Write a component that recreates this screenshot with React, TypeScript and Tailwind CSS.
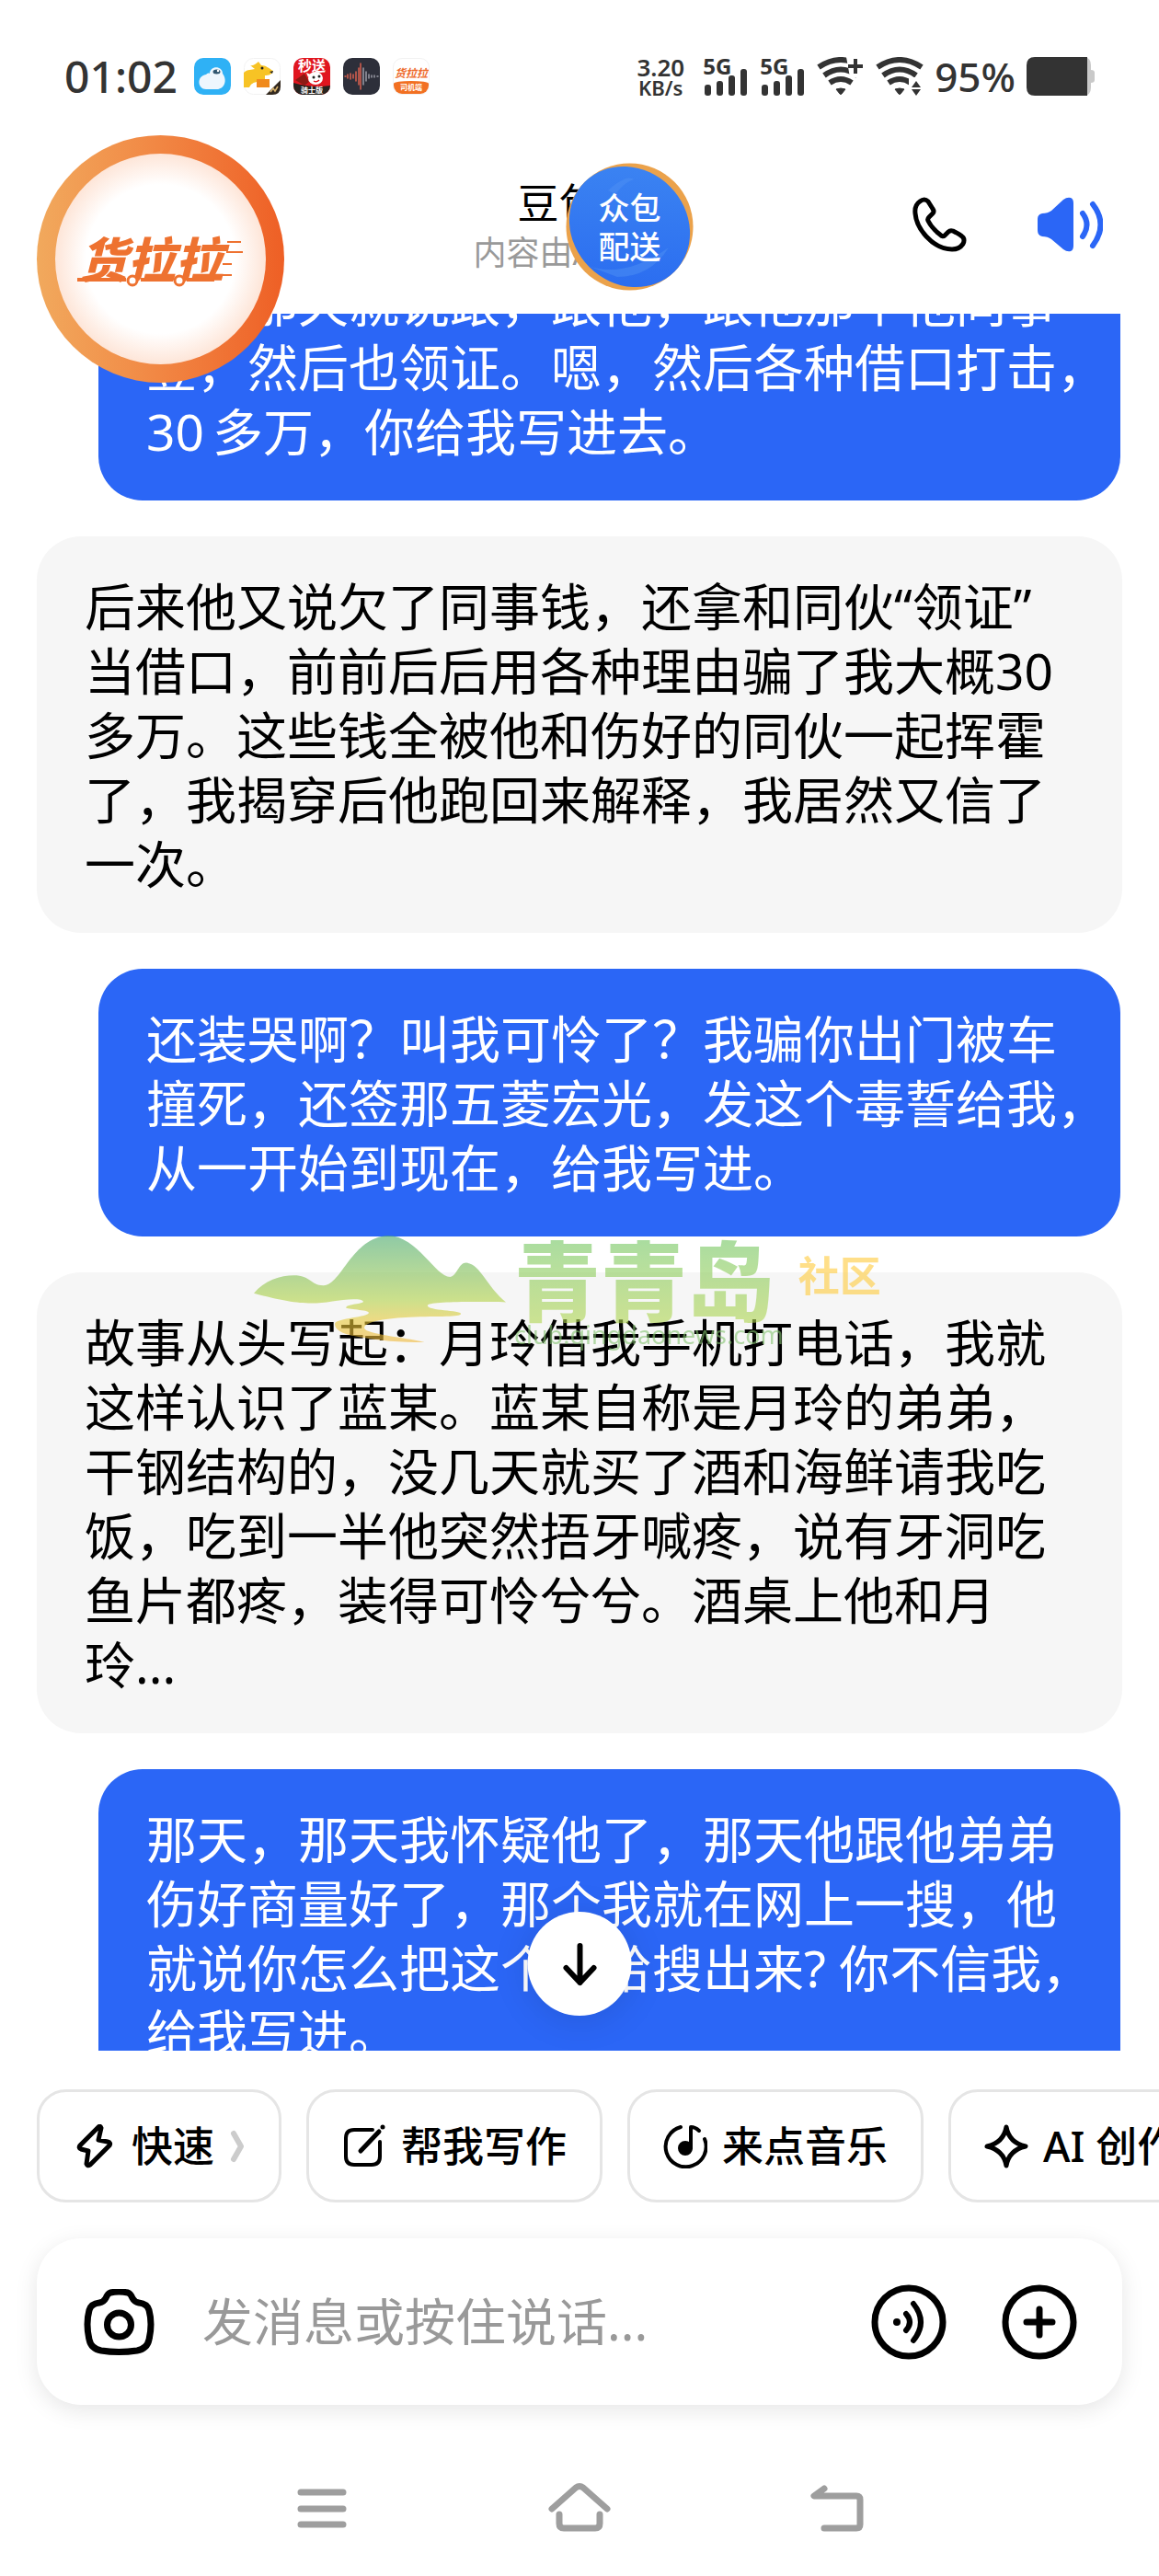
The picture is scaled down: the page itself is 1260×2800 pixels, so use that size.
import type { ReactNode } from 'react';

type Message = { from: 'me' | 'bot'; lines: string[]; watermark?: boolean };

const messages: Message[] = [
  {
    from: 'me',
    lines: ['后来那天就说跟，跟他，跟他那个他同事', '登，然后也领证。嗯，然后各种借口打击，', '30\u2009多万，你给我写进去。'],
  },
  {
    from: 'bot',
    lines: [
      '后来他又说欠了同事钱，还拿和同伙“领证”',
      '当借口，前前后后用各种理由骗了我大概30',
      '多万。这些钱全被他和伤好的同伙一起挥霍',
      '了，我揭穿后他跑回来解释，我居然又信了',
      '一次。',
    ],
  },
  {
    from: 'me',
    lines: ['还装哭啊？叫我可怜了？我骗你出门被车', '撞死，还签那五菱宏光，发这个毒誓给我，', '从一开始到现在，给我写进。'],
  },
  {
    from: 'bot',
    watermark: true,
    lines: [
      '故事从头写起：月玲借我手机打电话，我就',
      '这样认识了蓝某。蓝某自称是月玲的弟弟，',
      '干钢结构的，没几天就买了酒和海鲜请我吃',
      '饭，吃到一半他突然捂牙喊疼，说有牙洞吃',
      '鱼片都疼，装得可怜兮兮。酒桌上他和月',
      '玲...',
    ],
  },
  {
    from: 'me',
    lines: [
      '那天，那天我怀疑他了，那天他跟他弟弟',
      '伤好商量好了，那个我就在网上一搜，他',
      '就说你怎么把这个事给搜出来? 你不信我，',
      '给我写进。',
    ],
  },
];

function AppIcons() {
  return (
    <div className="flex gap-[14px]">
      <svg viewBox="0 0 40 40" className="size-10">
        <rect width="40" height="40" rx="10" fill="#2fb1f5" />
        <path d="M17 17c0-9 14-9 14 0 6 8 1 17-6 17H13C4 34 2 20 13 18c1-1 3-2 4-1z" fill="#eef6fd" />
        <ellipse cx="24.500" cy="15" rx="4" ry="2.500" fill="#31566f" />
        <circle cx="26" cy="14" r="1.200" fill="#fff" />
      </svg>
      <svg viewBox="0 0 40 40" className="size-10">
        <rect x=".5" y=".5" width="39" height="39" rx="10" fill="#fff" stroke="#f2f2f2" />
        <path d="M0 16c4-4 9-3 12-4L7 8c4 1 6-2 9-4l3 4c5 0 8 3 13 6-1 4-5 5-9 5v12H14v-5c-4 1-6 2-8 6H0z" fill="#f7c325" />
        <path d="M14 23h14v9H14z" fill="#f08a1c" />
        <circle cx="20" cy="11" r="1.500" fill="#222" />
        <path d="M28 15l4-1-1 3z" fill="#222" />
        <path d="M40 24v7q0 9-9 9h-7z" fill="#33291f" />
        <path d="M29 37l3-4 2 3 3-5" stroke="#d9b36b" strokeWidth="1.500" fill="none" />
      </svg>
      <div className="relative flex size-10 flex-col items-center justify-between overflow-hidden rounded-[10px] bg-[#e0161f] text-white">
        <svg viewBox="0 0 40 40" className="absolute inset-0">
          <path d="M0 27q20 6 40 3v10H0z" fill="#26231f" />
          <path d="M2 24l10-7 5 9-5 4z" fill="#8c1a14" />
          <ellipse cx="24" cy="22" rx="8" ry="7" fill="#fff" />
          <path d="M14 16l5 2-3 3z" fill="#fff" />
          <circle cx="22" cy="21" r="1.500" fill="#222" />
          <circle cx="28" cy="20" r="1.500" fill="#222" />
          <path d="M22 25q3 2 6-1" stroke="#e0161f" strokeWidth="1.500" fill="none" />
        </svg>
        <span className="relative text-[15px] leading-4 font-bold">秒送</span>
        <span className="relative text-[8px] leading-[11px] font-bold">骑士版</span>
      </div>
      <svg viewBox="0 0 40 40" className="size-10" fill="none" strokeWidth="1.500" strokeLinecap="round">
        <rect width="40" height="40" rx="10" fill="#2d2f3a" />
        <path d="M2 20h1M5 18v4M8 17v6M11 18v4M14 15v10M17 11v18M19 6v28" stroke="#d9604f" />
        <path d="M22 11v18M25 15v10M28 18v4M31 19v2M34 19v2M37 20h1" stroke="#9a9ca6" />
      </svg>
      <div className="flex size-10 flex-col justify-between overflow-hidden rounded-[10px] border border-[#f2f2f2] bg-white">
        <span className="pt-2 text-center text-xs leading-4 font-bold text-[#ee6a2c] italic">货拉拉</span>
        <span className="rounded-t-[50%_20%] bg-[#f27022] text-center text-[8px] leading-[14px] font-bold text-white">司机端</span>
      </div>
    </div>
  );
}

function Signal() {
  return (
    <div className="flex w-[50px] flex-col">
      <span className="h-[20px] text-2xl leading-[20px] font-bold">5G</span>
      <svg viewBox="0 0 50 30" className="-mt-[8px] h-[30px] w-[50px]" fill="#333">
        <rect x="2" y="18" width="7" height="12" rx="3" />
        <rect x="15" y="14" width="7" height="16" rx="3" />
        <rect x="28" y="8" width="7" height="22" rx="3" />
        <rect x="41" y="1" width="7" height="29" rx="3" />
      </svg>
    </div>
  );
}

function Wifi({ children }: { children: ReactNode }) {
  return (
    <svg viewBox="0 0 52 42" className="h-[42px] w-[52px]" fill="none" stroke="#333" strokeWidth="6">
      <path d="M2 11Q26-5 50 11" />
      <path d="M8 20Q26 7 44 20" />
      <path d="M14 28Q26 20 38 28" />
      <path d="M21 35q5-2 10 0l-4 5q-1 1-2 0z" fill="#333" strokeWidth="1" />
      {children}
    </svg>
  );
}

function StatusBar() {
  return (
    <div className="flex h-[146px] items-start justify-between pt-[58px] pr-[70px] pl-[70px] text-[#333]">
      <div className="flex h-[50px] items-center gap-[18px]">
        <span className="text-5xl font-medium">01:02</span>
        <AppIcons />
      </div>
      <div className="flex h-[50px] items-center gap-3">
        <div className="mr-2 text-center font-semibold">
          <div className="text-[26px] leading-[24px]">3.20</div>
          <div className="text-[22px] leading-[20px]">KB/s</div>
        </div>
        <Signal />
        <Signal />
        <Wifi>
          <path d="M32 0h20v22H36z" fill="#fff" stroke="none" />
          <path d="M34 10h16M42 2v16" strokeWidth="4" />
        </Wifi>
        <Wifi>
          <path d="M36 22h16v20H36z" fill="#fff" stroke="none" />
          <path d="M39 33l5-7 5 7zM39 35l5 7 5-7z" fill="#333" stroke="none" />
        </Wifi>
        <span className="text-[44px] font-medium">95%</span>
        <svg viewBox="0 0 74 42" className="h-[42px] w-[74px]">
          <path d="M60 0h2q8 0 8 9v5q4 0 4 3v8q0 3-4 3v5q0 9-8 9h-2z" fill="#c9c9c9" />
          <path d="M9 0h57v42H9q-9 0-9-9V9q0-9 9-9z" fill="#333" />
        </svg>
      </div>
    </div>
  );
}

function Header() {
  return (
    <header className="grid h-[195px] grid-cols-3 items-center">
      <div className="col-start-2 pt-2 text-center leading-[54px]">
        <h1 className="flex items-center justify-center text-[45px]">
          豆包
          <svg viewBox="0 0 45 45" className="size-[45px]" fill="none" stroke="#bbb" strokeWidth="4"><path d="M18 12l10 10-10 10" /></svg>
        </h1>
        <p className="pr-4 text-4xl leading-[54px] text-[#999]">内容由AI生成</p>
      </div>
      <div className="flex items-center justify-end gap-[76px] pr-[61px]">
        <button aria-label="语音通话">
          <svg viewBox="0 0 60 60" className="size-[60px]" fill="none" stroke="#000" strokeWidth="5" strokeLinejoin="round">
            <path d="M9 5Q3 9 4 18Q5 31 16 43Q29 57 44 57Q52 57 56 51Q58 47 56 44Q53 41 45 37Q42 36 40 38L36 42Q34 44 31 41Q22 34 18 26Q17 24 19 22L23 18Q25 16 23 13L18 5Q14 1 9 5z" />
          </svg>
        </button>
        <button aria-label="关闭朗读">
          <svg viewBox="0 0 72 60" className="h-[60px] w-[72px]" fill="none" stroke="#2b66f6" strokeWidth="6" strokeLinecap="round">
            <path d="M6 18Q1 19 1 24v12q0 6 5 7q6 0 10 3l13 11q4 3 8 2q3-1 3-6V7q0-5-3-6q-4-1-8 2L16 15q-4 3-10 3z" fill="#2b66f6" stroke="none" />
            <path d="M50 18q9 12 0 25" />
            <path d="M61 8q17 22 0 45" />
          </svg>
        </button>
      </div>
    </header>
  );
}

function HuolalaBall() {
  return (
    <div className="absolute top-[147px] left-10 z-20 size-[269px] rounded-full bg-linear-to-r from-[#f1a95d] to-[#ee5f25] p-5">
      <div className="relative flex size-full items-center justify-center rounded-full bg-radial from-white from-50% to-[#fde0d0] to-75%">
        <span className="pr-5 text-[52px] leading-[60px] font-black text-[#ee7230] italic">货拉拉</span>
        <svg viewBox="0 0 229 229" className="absolute inset-0" fill="none" stroke="#ee7230" strokeWidth="2">
          <path d="M187 96h15M186 107h18M182 120h10M176 132h16" />
          <path d="M24 137h53M93 137h35M143 137h30" strokeWidth="4" />
          <circle cx="84" cy="138" r="5" fill="#fff" strokeWidth="3" />
          <circle cx="135" cy="138" r="5" fill="#fff" strokeWidth="3" />
        </svg>
      </div>
    </div>
  );
}

function DeliveryBall() {
  return (
    <button className="absolute top-[177px] left-[615px] z-20 flex size-[139px] flex-col items-center justify-center text-[34px] leading-[42px] font-medium text-white">
      <svg viewBox="0 0 139 139" className="absolute inset-0">
        <defs>
          <linearGradient id="ball" x1="0" y1="0" x2="1" y2="1">
            <stop offset="0" stopColor="#3e87f2" />
            <stop offset="1" stopColor="#2869f0" />
          </linearGradient>
        </defs>
        <circle cx="69.500" cy="69.500" r="69" fill="#eba24b" />
        <ellipse cx="69.500" cy="69.500" rx="69" ry="62" fill="url(#ball)" transform="rotate(45 69.5 69.5)" />
        <path d="M46 30q20-18 28-12-10 3-20 16zM24 112q40 14 88-20-20 32-56 32z" fill="#4d90f4" opacity=".5" />
      </svg>
      <span className="relative">众包</span>
      <span className="relative">配送</span>
    </button>
  );
}

function Watermark() {
  return (
    <div className="pointer-events-none absolute -top-10 left-[236px] flex w-max opacity-60">
      <svg viewBox="57 68 590 352" preserveAspectRatio="none" className="h-[117px] w-[275px]">
        <defs>
          <linearGradient id="hill" x1="0" y1="0" x2="0" y2="1">
            <stop offset="0" stopColor="#46a76b" />
            <stop offset=".6" stopColor="#afd246" />
            <stop offset=".8" stopColor="#e9c939" />
            <stop offset="1" stopColor="#f0b839" />
          </linearGradient>
        </defs>
        <path
          fill="url(#hill)"
          d="M57 257C80 215 120 198 150 198C190 198 190 232 220 231C262 228 285 75 370 68C440 70 480 205 516 203C530 200 535 157 552 157C585 160 600 235 645 286C590 284 462 282 462 297C462 315 540 312 540 324C538 336 490 331 420 335C370 338 310 350 315 372C320 390 400 400 455 416C400 420 330 408 290 396C250 386 245 365 246 355C250 338 325 335 325 320C325 310 270 310 272 303C275 292 312 292 312 284C312 272 270 275 240 283C190 295 150 292 57 257Z"
        />
      </svg>
      <div className="ml-2">
        <div className="h-[96px] bg-linear-to-b from-[#6ec561] to-[#b1d650] bg-clip-text text-[94px] leading-[100px] font-black text-transparent">青青岛</div>
        <div className="text-[27px] leading-[24px] text-[#84c470]">club.qingdaonews.com</div>
      </div>
      <span className="ml-4 pt-5 text-[45px] leading-[48px] font-bold text-[#ffcb3c]">社区</span>
    </div>
  );
}

function Bubble({ message }: { message: Message }) {
  const mine = message.from === 'me';
  return (
    <div
      className={`relative rounded-[48px] pt-[41px] pb-[40px] pl-[52px] text-[55px] leading-[70px] whitespace-nowrap ${
        mine ? 'ml-[107px] mr-[42px] bg-[#2b66f6] text-white' : 'mx-10 bg-[#f6f6f6] text-black'
      }`}
    >
      {message.lines.map((line) => <p key={line}>{line}</p>)}
      {message.watermark && <Watermark />}
    </div>
  );
}

const chipCls = 'flex h-[123px] shrink-0 items-center gap-4 rounded-[32px] border-[3px] border-[#e5e5e5] px-9 text-[45px] font-medium whitespace-nowrap text-black';

function Chips() {
  return (
    <div className="flex gap-[27px] overflow-hidden pt-[42px] pl-10">
      <button className={chipCls}>
        <svg viewBox="0 0 48 48" className="size-12" fill="none" stroke="#000" strokeWidth="5" strokeLinejoin="round">
          <path d="M28 3L8 23Q6 26 9 27L17 29L15 43Q16 46 19 44L40 23Q42 20 38 19L28 17L31 4Q30 1 28 3z" />
        </svg>
        快速
        <svg viewBox="0 0 18 40" className="h-10 w-[18px]" fill="none" stroke="#ccc" strokeWidth="6" strokeLinecap="round" strokeLinejoin="round"><path d="M5 6l8 14-8 14" /></svg>
      </button>
      <button className={chipCls}>
        <svg viewBox="0 0 48 48" className="size-12" fill="none" stroke="#000" strokeWidth="4" strokeLinecap="round">
          <path d="M33 6H13Q4 6 4 15v20q0 9 9 9h19q9 0 9-9V19" />
          <path d="M20 29L40 8" strokeWidth="5" />
          <path d="M44 3v0" strokeWidth="5" />
        </svg>
        帮我写作
      </button>
      <button className={chipCls}>
        <svg viewBox="0 0 48 48" className="size-12" fill="none" stroke="#000" strokeWidth="4" strokeLinecap="round" strokeLinejoin="round">
          <path d="M19 3A22 22 0 1 0 45 16" />
          <path d="M30 26V3Q35 3 39 7" />
          <circle cx="24" cy="26" r="6" fill="#000" />
        </svg>
        来点音乐
      </button>
      <button className={chipCls}>
        <svg viewBox="0 0 48 48" className="size-12" fill="none" stroke="#000" strokeWidth="5" strokeLinejoin="round">
          <path d="M24 3Q27 20 45 24Q27 28 24 45Q21 28 3 24Q21 20 24 3z" />
        </svg>
        AI 创作
      </button>
    </div>
  );
}

function Composer() {
  return (
    <form className="mx-10 mt-[39px] flex h-[181px] items-center rounded-[48px] bg-white pr-[49px] pl-[51px] shadow-[0_6px_24px_rgba(0,0,0,0.1)]">
      <button type="button" aria-label="拍照">
        <svg viewBox="0 0 77 72" className="h-[72px] w-[77px]" fill="none" stroke="#000" strokeWidth="7">
          <path d="M29 4Q38 2 48 4Q51 5 53 10Q55 14 60 15Q69 16 71 23Q75 38 71 55Q69 65 58 67Q38 70 19 67Q8 65 6 55Q2 38 6 23Q8 16 17 15Q22 14 24 10Q26 5 29 4z" />
          <circle cx="38.500" cy="39" r="13" />
        </svg>
      </button>
      <input
        type="text"
        aria-label="消息"
        placeholder="发消息或按住说话..."
        className="mx-[52px] h-[80px] min-w-0 flex-1 text-[55px] text-black outline-none placeholder:text-[#999] placeholder:opacity-100"
      />
      <button type="button" aria-label="语音输入" className="mr-[60px]">
        <svg viewBox="0 0 82 82" className="size-[82px]" fill="none" stroke="#000" strokeWidth="7" strokeLinecap="round">
          <circle cx="41" cy="41" r="37" />
          <circle cx="28" cy="41" r="4" fill="#000" stroke="none" />
          <path d="M38 32q8 9 0 18M46 21q16 20 0 40" strokeWidth="6" />
        </svg>
      </button>
      <button type="button" aria-label="更多">
        <svg viewBox="0 0 82 82" className="size-[82px]" fill="none" stroke="#000" strokeWidth="7" strokeLinecap="round">
          <circle cx="41" cy="41" r="37" />
          <path d="M27 41h28M41 27v28" />
        </svg>
      </button>
    </form>
  );
}

function NavBar() {
  return (
    <nav className="flex h-[186px] items-center justify-center gap-[200px] pt-10">
      <button aria-label="最近任务">
        <svg viewBox="0 0 80 60" className="h-[60px] w-20" stroke="#9e9e9e" strokeWidth="7" strokeLinecap="round"><path d="M17 12h46M17 30h46M17 47h46" /></svg>
      </button>
      <button aria-label="主屏幕">
        <svg viewBox="0 0 80 60" className="h-[60px] w-20" fill="none" stroke="#9e9e9e" strokeWidth="7" strokeLinecap="round" strokeLinejoin="round">
          <path d="M10 30L36 7q4-3 8 0l26 23M18 36v10q0 5 5 5h34q5 0 5-5V36" />
        </svg>
      </button>
      <button aria-label="返回">
        <svg viewBox="0 0 80 60" className="h-[60px] w-20" fill="none" stroke="#9e9e9e" strokeWidth="7" strokeLinecap="round" strokeLinejoin="round">
          <path d="M26 8l-11 8h46q4 0 4 4v27q0 4-4 4H26" />
        </svg>
      </button>
    </nav>
  );
}

export default function App() {
  return (
    <div className="relative flex h-screen flex-col overflow-hidden bg-white font-['Noto_Sans','Noto_Sans_CJK_SC',sans-serif]">
      <StatusBar />
      <Header />
      <HuolalaBall />
      <DeliveryBall />
      <main className="relative min-h-0 flex-1 overflow-hidden">
        <div className="-mt-[88px] flex flex-col gap-[39px]">
          {messages.map((m) => <Bubble key={m.lines[0]} message={m} />)}
        </div>
        <button
          aria-label="滚动到底部"
          className="absolute bottom-[38px] left-1/2 flex size-[113px] -translate-x-1/2 items-center justify-center rounded-full bg-white shadow-[0_4px_40px_rgba(0,0,0,0.12)]"
        >
          <svg viewBox="0 0 44 50" className="h-[50px] w-11" fill="none" stroke="#000" strokeWidth="6" strokeLinecap="round" strokeLinejoin="round">
            <path d="M22 5v40M7 29l15 16 15-16" />
          </svg>
        </button>
      </main>
      <Chips />
      <Composer />
      <NavBar />
    </div>
  );
}
